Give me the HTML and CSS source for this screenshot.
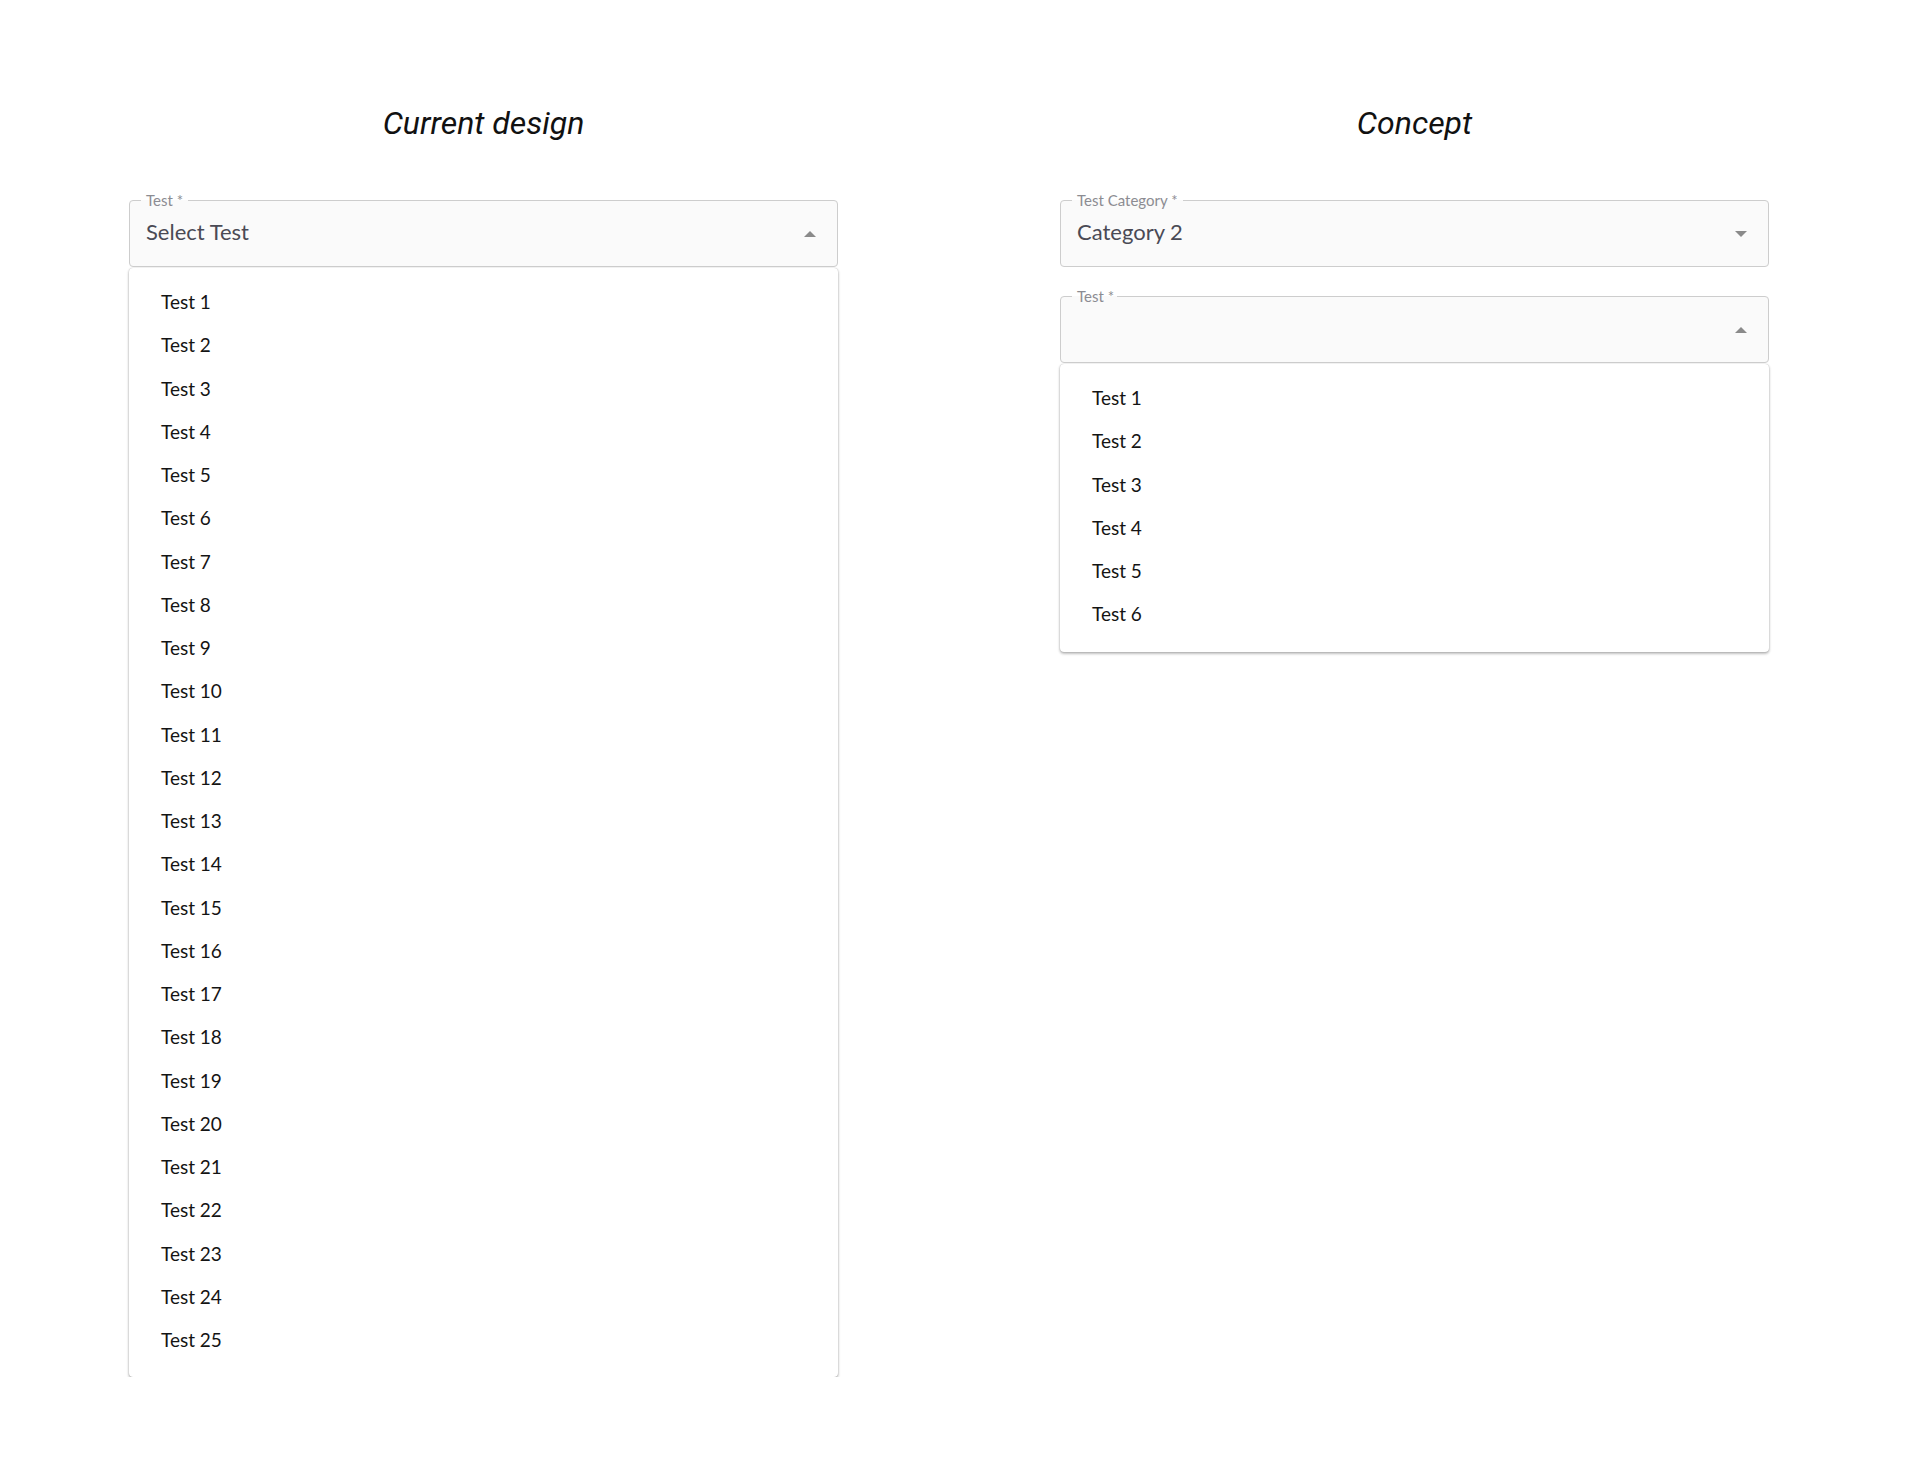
FILE: index.html
```html
<!DOCTYPE html>
<html lang="en">
<head>
<meta charset="utf-8">
<title>Select dropdown comparison</title>
<link rel="stylesheet" href="styles.css">
</head>
<body>
<main class="page">
  <section class="col">
    <h2 class="title">Current design</h2>
    <fieldset class="field">
      <legend class="field-label">Test *</legend>
      <div class="field-row">
        <span class="field-value">Select Test</span>
        <svg class="caret" viewBox="0 0 12 6" width="12" height="6"><polygon points="0,6 6,0 12,6"/></svg>
      </div>
    </fieldset>
    <ul class="menu">
      <li class="menu-item">Test 1</li>
      <li class="menu-item">Test 2</li>
      <li class="menu-item">Test 3</li>
      <li class="menu-item">Test 4</li>
      <li class="menu-item">Test 5</li>
      <li class="menu-item">Test 6</li>
      <li class="menu-item">Test 7</li>
      <li class="menu-item">Test 8</li>
      <li class="menu-item">Test 9</li>
      <li class="menu-item">Test 10</li>
      <li class="menu-item">Test 11</li>
      <li class="menu-item">Test 12</li>
      <li class="menu-item">Test 13</li>
      <li class="menu-item">Test 14</li>
      <li class="menu-item">Test 15</li>
      <li class="menu-item">Test 16</li>
      <li class="menu-item">Test 17</li>
      <li class="menu-item">Test 18</li>
      <li class="menu-item">Test 19</li>
      <li class="menu-item">Test 20</li>
      <li class="menu-item">Test 21</li>
      <li class="menu-item">Test 22</li>
      <li class="menu-item">Test 23</li>
      <li class="menu-item">Test 24</li>
      <li class="menu-item">Test 25</li>
    </ul>
  </section>
  <section class="col">
    <h2 class="title">Concept</h2>
    <fieldset class="field">
      <legend class="field-label">Test Category *</legend>
      <div class="field-row">
        <span class="field-value">Category 2</span>
        <svg class="caret" viewBox="0 0 12 6" width="12" height="6"><polygon points="0,0 12,0 6,6"/></svg>
      </div>
    </fieldset>
    <fieldset class="field field-second">
      <legend class="field-label field-label-tight">Test *</legend>
      <div class="field-row">
        <span class="field-value"></span>
        <svg class="caret" viewBox="0 0 12 6" width="12" height="6"><polygon points="0,6 6,0 12,6"/></svg>
      </div>
    </fieldset>
    <ul class="menu">
      <li class="menu-item">Test 1</li>
      <li class="menu-item">Test 2</li>
      <li class="menu-item">Test 3</li>
      <li class="menu-item">Test 4</li>
      <li class="menu-item">Test 5</li>
      <li class="menu-item">Test 6</li>
    </ul>
  </section>
</main>
</body>
</html>
```

FILE: styles.css
```css
html, body {
  margin: 0;
  padding: 0;
  background: #ffffff;
}

body {
  font-family: Lato, "Noto Sans", "Liberation Sans", sans-serif;
  color: #111111;
}

.page {
  display: flex;
  gap: 222px;
  padding-left: 129px;
}

.col {
  width: 709px;
  display: flex;
  flex-direction: column;
}

.title {
  margin: 103px 0 49px;
  height: 40px;
  line-height: 40px;
  text-align: center;
  font-family: Roboto, "Liberation Sans", sans-serif;
  font-style: italic;
  font-weight: 400;
  font-size: 32px;
  color: #111111;
}

.field {
  margin: 0;
  padding: 0;
  min-width: 0;
  border: 1px solid #cdcdcd;
  border-radius: 4px;
  background: #fafafa;
}

.field-second {
  margin-top: 21px;
}

.field-label {
  margin-left: 11px;
  padding: 0 5px;
  font-size: 15px;
  line-height: 16px;
  color: #8c8c92;
}

.field-label-tight {
  padding: 0 3px 0 5px;
}

.field-row {
  display: flex;
  align-items: center;
  justify-content: space-between;
  height: 51px;
  padding: 0 21px 7px 16px;
}

.field-value {
  margin-bottom: 4px;
  font-size: 22px;
  color: #4a4a55;
}

.caret {
  display: block;
  fill: #8a8a8a;
}

.menu {
  list-style: none;
  margin: 1px 0 0;
  padding: 12px 0 16px;
  background: #ffffff;
  border-radius: 4px;
  box-shadow: 0 0 1px rgba(0, 0, 0, 0.25), 0 1px 3px rgba(0, 0, 0, 0.2), 0 2px 3px rgba(0, 0, 0, 0.16);
}

.menu-item {
  height: 43.25px;
  display: flex;
  align-items: center;
  padding-left: 32px;
  font-size: 19px;
  color: #141414;
}
```
